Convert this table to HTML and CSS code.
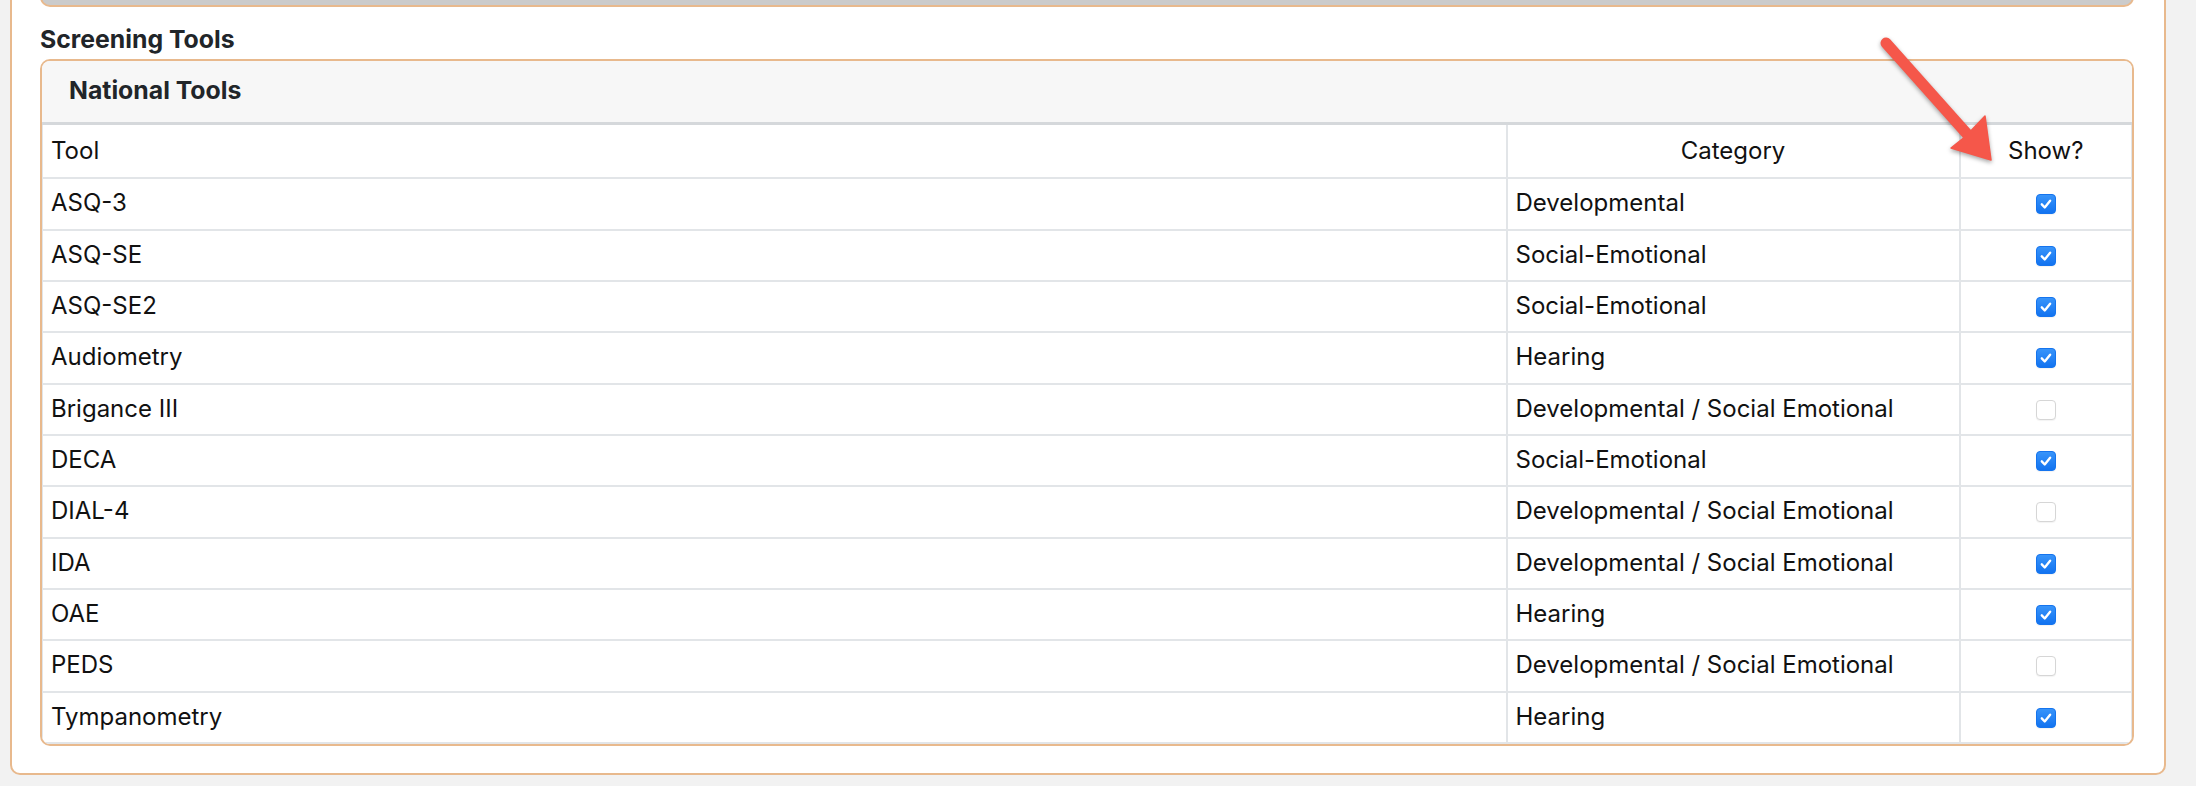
FILE: index.html
```html
<!DOCTYPE html>
<html lang="en">
<head>
    <meta charset="UTF-8">
    <meta name="viewport" content="width=device-width, initial-scale=1.0">
    <title>Screening Tools</title>
    <link rel="stylesheet" href="styles.css">
</head>
<body>

<div class="panel">
    <!-- bottom of the section above, cut off by the viewport -->
    <div class="prev-box"></div>

    <h3 class="section-title">Screening Tools</h3>

    <div class="card">
        <div class="card-header">National Tools</div>
        <table class="tools">
            <colgroup>
                <col class="col-tool">
                <col class="col-category">
                <col>
            </colgroup>
            <thead>
                <tr>
                    <th>Tool</th>
                    <th class="center">Category</th>
                    <th class="center">Show?</th>
                </tr>
            </thead>
            <tbody>
                <tr><td>ASQ-3</td><td>Developmental</td><td class="center"><span class="check on"><svg viewBox="0 0 20 20"><path d="M5.3 10.4l3.3 3.5 6-7.6"/></svg></span></td></tr>
                <tr><td>ASQ-SE</td><td>Social-Emotional</td><td class="center"><span class="check on"><svg viewBox="0 0 20 20"><path d="M5.3 10.4l3.3 3.5 6-7.6"/></svg></span></td></tr>
                <tr><td>ASQ-SE2</td><td>Social-Emotional</td><td class="center"><span class="check on"><svg viewBox="0 0 20 20"><path d="M5.3 10.4l3.3 3.5 6-7.6"/></svg></span></td></tr>
                <tr><td>Audiometry</td><td>Hearing</td><td class="center"><span class="check on"><svg viewBox="0 0 20 20"><path d="M5.3 10.4l3.3 3.5 6-7.6"/></svg></span></td></tr>
                <tr><td>Brigance III</td><td>Developmental / Social Emotional</td><td class="center"><span class="check"></span></td></tr>
                <tr><td>DECA</td><td>Social-Emotional</td><td class="center"><span class="check on"><svg viewBox="0 0 20 20"><path d="M5.3 10.4l3.3 3.5 6-7.6"/></svg></span></td></tr>
                <tr><td>DIAL-4</td><td>Developmental / Social Emotional</td><td class="center"><span class="check"></span></td></tr>
                <tr><td>IDA</td><td>Developmental / Social Emotional</td><td class="center"><span class="check on"><svg viewBox="0 0 20 20"><path d="M5.3 10.4l3.3 3.5 6-7.6"/></svg></span></td></tr>
                <tr><td>OAE</td><td>Hearing</td><td class="center"><span class="check on"><svg viewBox="0 0 20 20"><path d="M5.3 10.4l3.3 3.5 6-7.6"/></svg></span></td></tr>
                <tr><td>PEDS</td><td>Developmental / Social Emotional</td><td class="center"><span class="check"></span></td></tr>
                <tr><td>Tympanometry</td><td>Hearing</td><td class="center"><span class="check on"><svg viewBox="0 0 20 20"><path d="M5.3 10.4l3.3 3.5 6-7.6"/></svg></span></td></tr>
            </tbody>
        </table>
    </div>
</div>

<!-- Annotation arrow pointing at the Show? column -->
<svg class="annotation" viewBox="1866 26 146 150" width="146" height="150">
    <line x1="1886" y1="43" x2="1968" y2="135" class="arrow-shaft"/>
    <polygon points="1991,160 1951,148 1966,136 1985,116" class="arrow-head"/>
</svg>

</body>
</html>
```

FILE: styles.css
```css
body {
    font-family: 'Inter', 'Liberation Sans', sans-serif;
    margin: 0;
    padding: 0;
    background-color: #f2f2f2;
    color: #111;
}

/* Contenedor de la sección */
.panel {
    box-sizing: border-box;
    width: 2156px;
    margin: -20px 0 0 10px;
    padding: 0 30px 27px 28px;
    background-color: #ffffff;
    border: 2px solid #e8b98d;
    border-radius: 10px;
}

.prev-box {
    height: 23px;
    background-color: #cbcbcb;
    border: 2px solid #e8b98d;
    border-top: none;
    border-radius: 0 0 10px 10px;
}

.section-title {
    margin: 17px 0 5px;
    font-size: 24.8px;
    line-height: 30px;
    font-weight: 700;
    color: #212529;
}

.card {
    border: 2px solid #e8b98d;
    border-radius: 10px;
    overflow: hidden;
}

.card-header {
    padding: 15px 27px 18px;
    font-size: 24.8px;
    line-height: 28px;
    font-weight: 700;
    color: #212529;
    background-color: #f7f7f7;
    border-bottom: 3px solid #d5d8db;
}

/* Tabla de herramientas */
.tools {
    width: 100%;
    border-collapse: collapse;
    table-layout: fixed;
    font-size: 24px;
}

.col-tool {
    width: 1464px;
}

.col-category {
    width: 453px;
}

.tools th, .tools td {
    border: 2px solid #e2e5e8;
    padding: 8px 8px 10px;
    line-height: 31.33px;
    text-align: left;
    font-weight: 400;
    white-space: nowrap;
}

.tools th {
    padding-top: 10px;
    padding-bottom: 11px;
}

.tools tr:first-child th {
    border-top: none;
}

.tools th:first-child, .tools td:first-child {
    border-left: 1px solid #e2e5e8;
}

.tools th:last-child, .tools td:last-child {
    border-right: 1px solid #e2e5e8;
}

.tools .center {
    text-align: center;
}

/* Casillas estilo macOS */
.check {
    display: inline-block;
    box-sizing: border-box;
    width: 20px;
    height: 20px;
    vertical-align: -3px;
    border: 1px solid #d6d6d6;
    border-radius: 4px;
    background-color: #ffffff;
    box-shadow: 0 1px 1px rgba(0, 0, 0, 0.05);
}

.check.on {
    border-color: #1574ee;
    background: linear-gradient(#3894fa, #1273f0);
}

.check svg {
    display: block;
    width: 18px;
    height: 18px;
}

.check path {
    fill: none;
    stroke: #ffffff;
    stroke-width: 2.6;
    stroke-linecap: round;
    stroke-linejoin: round;
}

.annotation {
    position: absolute;
    left: 1866px;
    top: 26px;
    filter: drop-shadow(0 2px 2px rgba(0, 0, 0, 0.35));
}

.arrow-shaft {
    stroke: #f5574a;
    stroke-width: 11;
    stroke-linecap: round;
}

.arrow-head {
    fill: #f5574a;
    stroke: #f5574a;
    stroke-width: 1.5;
    stroke-linejoin: round;
}
```
